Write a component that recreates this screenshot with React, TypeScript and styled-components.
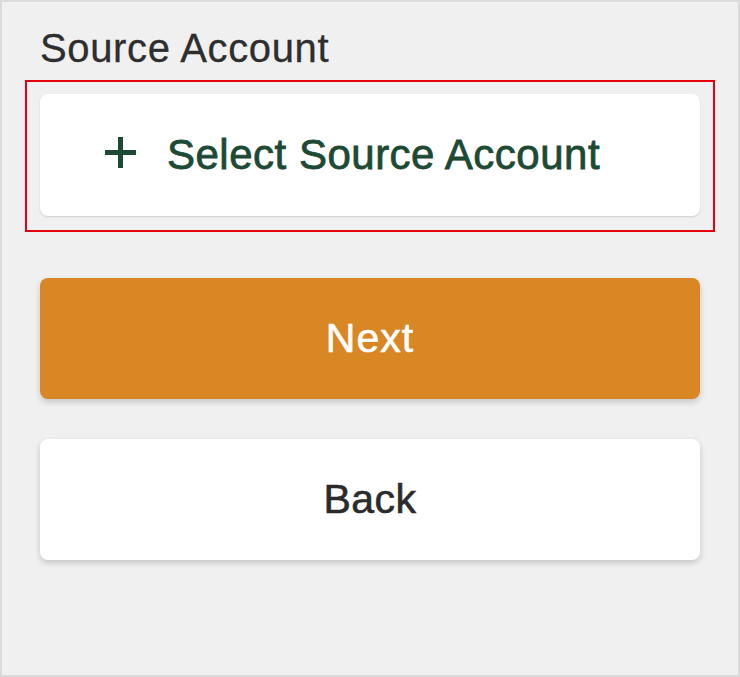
import React from "react";
import styled, { createGlobalStyle } from "styled-components";

const GlobalStyle = createGlobalStyle`
  html, body {
    margin: 0;
    padding: 0;
    background: #f0f0f0;
  }
  * { box-sizing: border-box; }
`;

const Page = styled.div`
  width: 740px;
  height: 677px;
  border: 2px solid #dadada;
  background: #f0f0f0;
  padding: 23px 38px 0;
  display: flex;
  flex-direction: column;
  font-family: "Liberation Sans", Arial, sans-serif;
`;

const Title = styled.h2`
  margin: 0;
  font-size: 40px;
  line-height: 46px;
  font-weight: 400;
  color: #2e2e2e;
  -webkit-text-stroke: 0.3px #2e2e2e;
  letter-spacing: 0.65px;
`;

const Highlight = styled.div`
  margin: 9px -15px 0;
  border: 2px solid #e60012;
  padding: 12px 13px 14px;
`;

const SelectCard = styled.button`
  width: 100%;
  height: 122px;
  border: none;
  border-radius: 8px;
  background: #ffffff;
  box-shadow: 0 1px 2px rgba(0, 0, 0, 0.14);
  display: flex;
  align-items: center;
  gap: 31px;
  padding: 0 0 0 65px;
  color: #1c4a34;
  font-family: inherit;
  font-size: 42px;
  font-weight: 400;
  -webkit-text-stroke: 0.8px #1c4a34;
  letter-spacing: 0.5px;
  cursor: pointer;
`;

const PlusIcon = styled.svg`
  width: 31px;
  height: 31px;
  flex: none;
  margin-bottom: 5px;
`;

const Actions = styled.div`
  margin-top: 46px;
  display: flex;
  flex-direction: column;
  gap: 40px;
`;

const ActionButton = styled.button<{ $primary?: boolean }>`
  width: 100%;
  height: 121px;
  border: none;
  border-radius: 8px;
  background: ${(p) => (p.$primary ? "#d88724" : "#ffffff")};
  color: ${(p) => (p.$primary ? "#ffffff" : "#2b2b2b")};
  -webkit-text-stroke: 0.6px ${(p) => (p.$primary ? "#ffffff" : "#2b2b2b")};
  box-shadow: 0 3px 6px rgba(0, 0, 0, 0.18);
  font-family: inherit;
  font-size: 41px;
  font-weight: 400;
  letter-spacing: ${(p) => (p.$primary ? "1px" : "0.5px")};
  display: flex;
  align-items: center;
  justify-content: center;
  cursor: pointer;
`;

export default function App() {
  return (
    <>
      <GlobalStyle />
      <Page>
        <Title>Source Account</Title>
        <Highlight>
          <SelectCard type="button">
            <PlusIcon viewBox="0 0 31 31" aria-hidden="true">
              <path d="M15.5 0V31M0 15.5H31" stroke="#1c4a34" strokeWidth="5" fill="none" />
            </PlusIcon>
            <span>Select Source Account</span>
          </SelectCard>
        </Highlight>
        <Actions>
          <ActionButton type="button" $primary>
            Next
          </ActionButton>
          <ActionButton type="button">Back</ActionButton>
        </Actions>
      </Page>
    </>
  );
}
